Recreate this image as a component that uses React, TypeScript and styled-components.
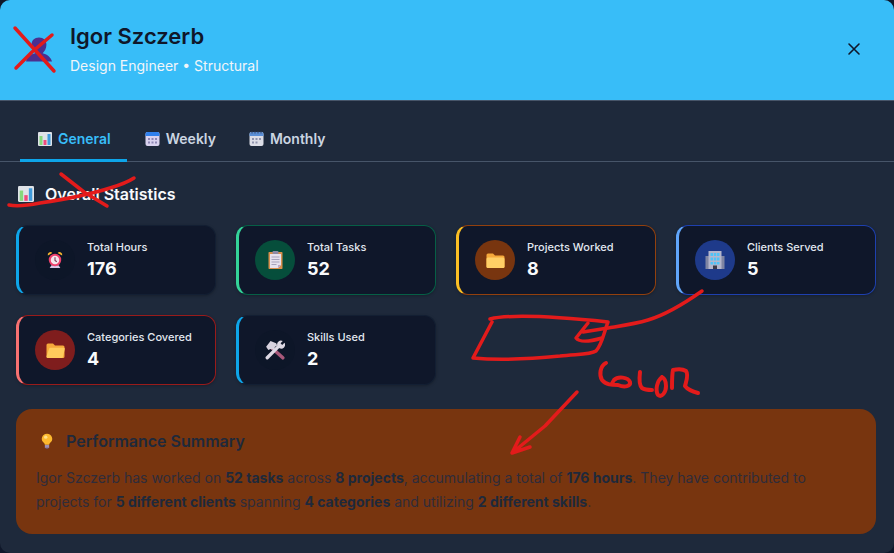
import * as React from 'react'
import styled, { createGlobalStyle } from 'styled-components'

const GlobalStyle = createGlobalStyle`
html, body {
  margin: 0;
  padding: 0;
  background: #0f172a;
}
* { box-sizing: border-box; }
`

const Modal = styled.div`
position: relative;
width: 894px;
height: 553px;
overflow: hidden;
border-radius: 10px;
background: #1e293b;
font-family: Inter, "Liberation Sans", sans-serif;
`

const Header = styled.header`
height: 101px;
padding: 0 24px 2px 16px;
display: flex;
align-items: center;
gap: 16px;
background: #38bdf8;
border-bottom: 1px solid #475569;
`

const Avatar = styled.div`
width: 38px;
height: 38px;
padding-right: 2px;
display: flex;
align-items: center;
justify-content: flex-end;
`

const HeaderText = styled.div`
flex: 1;
`

const Name = styled.h1`
margin: 0 0 6px;
font-size: 22px;
line-height: 28px;
font-weight: 600;
color: #0f172a;
`

const Role = styled.p`
margin: 0;
font-size: 14px;
line-height: 20px;
font-weight: 400;
color: #f1f5f9;
`

const CloseButton = styled.button`
width: 32px;
height: 32px;
padding: 0;
border: 0;
background: none;
color: #0f172a;
display: flex;
align-items: center;
justify-content: center;
`

const Tabs = styled.nav`
height: 61px;
padding: 0 20px;
display: flex;
align-items: flex-end;
border-bottom: 1px solid #475569;
`

const Tab = styled.div<{ $active?: boolean }>`
height: 60px;
margin-bottom: -1px;
padding: 16px 16px 0 18px;
display: flex;
align-items: center;
gap: 6px;
font-size: 14px;
font-weight: 600;
color: ${p => (p.$active ? '#38bdf8' : '#cbd5e1')};
border-bottom: 3px solid ${p => (p.$active ? '#0ea5e9' : 'transparent')};
&:last-child { margin-left: -1px; }
`

const Content = styled.main`
padding: 20px 18px 0 16px;
`

const SectionTitle = styled.h2`
margin: 0 0 19px 2px;
display: flex;
align-items: center;
gap: 11px;
font-size: 16px;
line-height: 24px;
font-weight: 600;
color: #f8fafc;
`

const StatGrid = styled.div`
display: grid;
grid-template-columns: repeat(4, 200px);
gap: 20px;
`

const Card = styled.div<{ $edge: string; $line: string }>`
height: 70px;
padding: 0 15px 0 16px;
display: flex;
align-items: center;
gap: 12px;
background: #0f172a;
border: 1px solid ${p => p.$line};
border-left: 3px solid ${p => p.$edge};
border-radius: 12px;
box-shadow: 0 1px 3px rgba(0, 0, 0, 0.25);
`

const IconCircle = styled.div<{ $bg: string }>`
width: 40px;
height: 40px;
flex: none;
border-radius: 50%;
background: ${p => p.$bg};
display: flex;
align-items: center;
justify-content: center;
`

const CardLabel = styled.div`
font-size: 11px;
line-height: 16px;
font-weight: 500;
color: #e2e8f0;
`

const CardValue = styled.div`
margin-top: 1px;
font-size: 18px;
line-height: 26px;
font-weight: 700;
color: #f8fafc;
`

const Summary = styled.section`
height: 125px;
margin-top: 24px;
padding: 20px;
background: #78350f;
border-radius: 16px;
color: #1e293b;
`

const SummaryTitle = styled.h3`
margin: 0 0 13px;
display: flex;
align-items: center;
gap: 13px;
font-size: 16px;
line-height: 24px;
font-weight: 600;
svg { margin-left: 5px; }
`

const SummaryText = styled.p`
margin: 0;
font-size: 14px;
line-height: 24px;
font-weight: 400;
color: #2f2c3a;
strong { font-weight: 700; color: #1e293b; }
`

const Scribbles = styled.svg`
position: absolute;
left: 0;
top: 0;
pointer-events: none;
fill: none;
stroke: #e31b1b;
stroke-width: 3.5;
stroke-linecap: round;
stroke-linejoin: round;
`

const ChartIcon = ({ size = 16 }: { size?: number }) => (
  <svg width={size} height={size} viewBox="1 1 14 14">
    <rect x="1" y="1" width="14" height="14" rx="1" fill="#dfe3e8" />
    <rect x="2.5" y="5" width="3" height="9" fill="#86d97b" />
    <rect x="6.5" y="9" width="3" height="5" fill="#ef4a7d" />
    <rect x="10.5" y="3" width="3" height="11" fill="#3f9bdc" />
  </svg>
)

const WeeklyIcon = () => (
  <svg width="15" height="16" viewBox="0 0 15 16">
    <rect x="0.5" y="1" width="14" height="14" rx="2" fill="#d9d2ef" />
    <path d="M0.5 5V3a2 2 0 0 1 2-2h10a2 2 0 0 1 2 2v2z" fill="#2f80ed" />
    <path d="M3 7h2v2H3zM6.5 7h2v2h-2zM10 7h2v2h-2zM3 10.5h2v2H3zM6.5 10.5h2v2h-2zM10 10.5h2v2h-2z" fill="#8d86b5" />
  </svg>
)

const MonthlyIcon = () => (
  <svg width="15" height="16" viewBox="0 0 15 16">
    <rect x="0.5" y="1" width="14" height="14" rx="2" fill="#dcdde6" />
    <path d="M0.5 5V3a2 2 0 0 1 2-2h10a2 2 0 0 1 2 2v2z" fill="#5b8fd6" />
    <path d="M2.5 0.5h1v2h-1zM5.5 0.5h1v2h-1zM8.5 0.5h1v2h-1zM11.5 0.5h1v2h-1z" fill="#3b4a6b" />
    <path d="M3 7h2v2H3zM6.5 7h2v2h-2zM10 7h2v2h-2zM3 10.5h2v2H3zM6.5 10.5h2v2h-2z" fill="#8f93ad" />
  </svg>
)

const AlarmIcon = () => (
  <svg width="16" height="18" viewBox="0 0 18 20">
    <path d="M1 5a3 3 0 0 1 5-3zM17 5a3 3 0 0 0-5-3z" fill="#f5b52e" />
    <path d="M3 19l2-3h8l2 3z" fill="#d9c8e8" />
    <circle cx="9" cy="10" r="7" fill="#f0416c" />
    <circle cx="9" cy="10" r="4.8" fill="#f6e6ec" />
    <path d="M9 7v3.5l2 1.5" stroke="#7a3a55" strokeWidth="1.2" fill="none" />
  </svg>
)

const ClipboardIcon = () => (
  <svg width="15" height="18" viewBox="0 0 15 18">
    <rect x="0.5" y="1" width="14" height="17" rx="0.8" fill="#d98f4e" />
    <path d="M2 3h11v11l-3 3H2z" fill="#e6e1ee" />
    <path d="M10 17l3-3h-3z" fill="#b9a8c9" />
    <rect x="4.5" y="0" width="6" height="3" rx="1" fill="#8d8aa5" />
    <path d="M3.5 6h8M3.5 8.5h8M3.5 11h8M3.5 13.5h5" stroke="#a7a3bd" strokeWidth="1" />
  </svg>
)

const FolderIcon = ({ open }: { open?: boolean }) => (
  <svg width="19" height="17" viewBox="0 0 19 17">
    <path d="M0.5 3a1.5 1.5 0 0 1 1.5-1.5h5l2 2h8a1.5 1.5 0 0 1 1.5 1.5v9.500a1.500 1.500 0 0 1-1.500 1.500H2A1.500 1.500 0 0 1 0.500 14.500z" fill="#f6a93b" />
    {open ? (
      <path d="M3 7a1.500 1.500 0 0 1 1.500-1.200H17.500a1.200 1.200 0 0 1 1.200 1.500L17 14.800A1.500 1.500 0 0 1 15.500 16H2a1.500 1.500 0 0 1-1.500-1.500z" fill="#ffcb5c" />
    ) : (
      <rect x="0.5" y="5.500" width="18" height="10.500" rx="1.500" fill="#ffcf66" />
    )}
  </svg>
)

const BuildingIcon = () => (
  <svg width="20" height="20" viewBox="0 0 20 20">
    <path d="M0.5 6h4v13h-4zM15.500 6h4v13h-4z" fill="#7f85a3" />
    <rect x="3.500" y="1" width="13" height="18" fill="#b4b6cc" />
    <path d="M5.500 3h2.500v3H5.500zM8.800 3h2.500v3H8.800zM12 3h2.500v3H12zM5.500 7.500h2.500v3H5.500zM8.800 7.500h2.500v3H8.800zM12 7.500h2.500v3H12zM5.500 12h2.500v2.500H5.500zM8.800 12h2.500v2.500H8.800zM12 12h2.500v2.500H12z" fill="#4fc3f7" />
    <rect x="8" y="15.500" width="4" height="3.500" fill="#3b3a4a" />
  </svg>
)

const ToolsIcon = () => (
  <svg width="20" height="20" viewBox="0 0 18 18">
    <path d="M6 7l10 9" stroke="#a8587a" strokeWidth="3.200" strokeLinecap="round" />
    <path d="M1 6l4-5 5 2 1 2-2 1-1 3-3-1-2 1z" fill="#d8d3df" />
    <path d="M2 16L12 6" stroke="#ded9e4" strokeWidth="3" strokeLinecap="round" />
    <path d="M11 5a3.500 3.500 0 0 1 5-4l-2 2 1.500 1.500 2-2a3.500 3.500 0 0 1-4.500 5z" fill="#ded9e4" />
  </svg>
)

const BulbIcon = () => (
  <svg width="12" height="16" viewBox="0 0 14 18">
    <path d="M7 0.500a6 6 0 0 1 3.500 10.900c-.6.500-.9 1.200-1 2.100h-5c-.1-.9-.4-1.600-1-2.100A6 6 0 0 1 7 .500z" fill="#fdb92e" />
    <circle cx="5.500" cy="4.500" r="2" fill="#ffe08a" />
    <rect x="4.500" y="13.500" width="5" height="3.500" fill="#9d8fb5" />
    <rect x="5.500" y="17" width="3" height="1" fill="#6f5f8a" />
  </svg>
)

const stats = [
  { label: 'Total Hours', value: '176', edge: '#0ea5e9', line: '#131f33', circle: '#0d1628', icon: <AlarmIcon /> },
  { label: 'Total Tasks', value: '52', edge: '#34d399', line: '#065f46', circle: '#064e3b', icon: <ClipboardIcon /> },
  { label: 'Projects Worked', value: '8', edge: '#fbbf24', line: '#92400e', circle: '#78350f', icon: <FolderIcon /> },
  { label: 'Clients Served', value: '5', edge: '#60a5fa', line: '#1e40af', circle: '#1e3a8a', icon: <BuildingIcon /> },
  { label: 'Categories Covered', value: '4', edge: '#f87171', line: '#991b1b', circle: '#7f1d1d', icon: <FolderIcon open /> },
  { label: 'Skills Used', value: '2', edge: '#0ea5e9', line: '#131f33', circle: '#0d1628', icon: <ToolsIcon /> },
]

const App = () => (
  <Modal>
    <GlobalStyle />
    <Header>
      <Avatar>
        <svg width="26" height="27" viewBox="3 3 28 26">
          <path d="M17 3c5 0 8 3 8 8 0 4-2 7-4 9 4 1 9 4 10 9H3c1-5 5-8 10-9-2-2-4-5-4-9 0-5 3-8 8-8z" fill="#4c2f8f" />
        </svg>
      </Avatar>
      <HeaderText>
        <Name>Igor Szczerb</Name>
        <Role>Design Engineer • Structural</Role>
      </HeaderText>
      <CloseButton aria-label="Close">
        <svg width="14" height="14" viewBox="0 0 14 14" stroke="currentColor" strokeWidth="1.600" strokeLinecap="round">
          <path d="M2 2l10 10M12 2L2 12" />
        </svg>
      </CloseButton>
    </Header>

    <Tabs>
      <Tab $active><ChartIcon size={14} />General</Tab>
      <Tab><WeeklyIcon />Weekly</Tab>
      <Tab><MonthlyIcon />Monthly</Tab>
    </Tabs>

    <Content>
      <SectionTitle><ChartIcon />Overall Statistics</SectionTitle>
      <StatGrid>
        {stats.map(s => (
          <Card key={s.label} $edge={s.edge} $line={s.line}>
            <IconCircle $bg={s.circle}>{s.icon}</IconCircle>
            <div>
              <CardLabel>{s.label}</CardLabel>
              <CardValue>{s.value}</CardValue>
            </div>
          </Card>
        ))}
      </StatGrid>

      <Summary>
        <SummaryTitle><BulbIcon />Performance Summary</SummaryTitle>
        <SummaryText>
          Igor Szczerb has worked on <strong>52 tasks</strong> across <strong>8 projects</strong>, accumulating a total of <strong>176 hours</strong>. They have contributed to projects for <strong>5 different clients</strong> spanning <strong>4 categories</strong> and utilizing <strong>2 different skills</strong>.
        </SummaryText>
      </Summary>
    </Content>

    {/* red pen marks drawn over the screenshot */}
    <Scribbles width="894" height="553" viewBox="0 0 894 553">
      <path d="M15 28L54 71" />
      <path d="M52 35L32 52L16 68" />
      <path d="M61 174L84 192L107 206" />
      <path d="M9 205C18 207 30 205 40 203C60 200 85 196 110 188C120 185 128 182 134 178" />
      <path d="M702 291C685 303 665 315 648 320C635 324 620 326 608 328L583 332" />
      <path d="M490 319C510 314 560 317 608 322C604 332 602 345 596 351C590 355 575 354 560 356C530 359 495 360 473 358L492 322" />
      <path d="M588 323L576 338C580 343 592 341 602 338" />
      <g strokeWidth="4">
        <path d="M606 363C600 366 599 375 602 380C606 385 612 385 618 385C625 388 631 386 630 382C628 377 618 376 614 380C612 383 612 384 612 384" />
        <path d="M640 372C639 380 640 386 642 388C645 390 649 390 652 390" />
        <path d="M662 377C657 381 655 390 658 395C662 398 666 392 666 386C666 381 664 378 662 377" />
        <path d="M672 388C672 380 672 374 673 370C677 369 683 369 686 371C689 375 686 382 685 386C688 390 694 392 698 393" />
      </g>
      <path d="M577 392L545 426L512 453L520 437M512 453L530 447" />
    </Scribbles>
  </Modal>
)

export default App
